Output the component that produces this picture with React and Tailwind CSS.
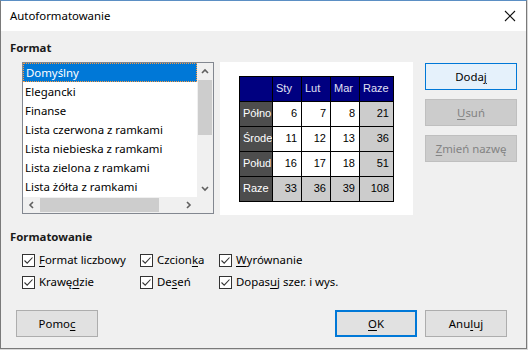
import React from "react";

const font = { fontFamily: '"Noto Sans", "Open Sans", sans-serif' };

function U({ children }) {
  return <span className="underline underline-offset-2 decoration-1">{children}</span>;
}

function Check() {
  return (
    <div className="w-[13px] h-[13px] border border-[#333333] bg-white flex items-center justify-center shrink-0">
      <svg width="11" height="11" viewBox="0 0 11 11">
        <path d="M1.5 5.5 L4.2 8.2 L9.5 2.5" fill="none" stroke="#333333" strokeWidth="1.1" />
      </svg>
    </div>
  );
}

function CheckItem({ label, w }) {
  return (
    <div className={`flex items-center gap-[4px] h-[22px] ${w}`}>
      <Check />
      <span className="text-[11.4px] text-black leading-none">{label}</span>
    </div>
  );
}

function Btn({ children, className = "", variant = "normal" }) {
  const v =
    variant === "default"
      ? "border border-[#0078d7] bg-[#e5f1fb] text-black"
      : variant === "focus"
      ? "border-2 border-[#0078d7] bg-[#e1e1e1] text-black"
      : variant === "disabled"
      ? "border border-[#bfbfbf] bg-[#cccccc] text-[#838383]"
      : "border border-[#adadad] bg-[#e1e1e1] text-black";
  return (
    <div className={`h-[27px] flex items-center justify-center text-[11.4px] ${v} ${className}`}>
      {children}
    </div>
  );
}

const items = [
  "Domyślny",
  "Elegancki",
  "Finanse",
  "Lista czerwona z ramkami",
  "Lista niebieska z ramkami",
  "Lista zielona z ramkami",
  "Lista żółta z ramkami",
];

function Chevron({ dir }) {
  const d = {
    up: "M2 6 L5 3 L8 6",
    down: "M2 3 L5 6 L8 3",
    left: "M6 2 L3 5 L6 8",
    right: "M3 2 L6 5 L3 8",
  }[dir];
  return (
    <svg width="10" height="10" viewBox="0 0 10 10">
      <path d={d} fill="none" stroke="#606060" strokeWidth="1.6" />
    </svg>
  );
}

function ListBox() {
  return (
    <div className="w-[192px] h-[152px] border border-[#828790] bg-white flex flex-col">
      <div className="flex flex-1 min-h-0">
        <div className="flex-1 flex flex-col">
          {items.map((it, i) => (
            <div
              key={it}
              className={`h-[19px] flex items-center pl-[2px] text-[11.4px] whitespace-nowrap ${
                i === 0
                  ? "bg-[#0078d7] text-white border border-dotted border-[#ff9b3d]"
                  : "text-black"
              }`}
            >
              {it}
            </div>
          ))}
        </div>
        <div className="w-[16px] bg-[#f0f0f0] flex flex-col">
          <div className="h-[17px] flex items-center justify-center">
            <Chevron dir="up" />
          </div>
          <div className="flex-1 flex flex-col px-[1px]">
            <div className="h-[55px] bg-[#cdcdcd]" />
          </div>
          <div className="h-[17px] flex items-center justify-center">
            <Chevron dir="down" />
          </div>
        </div>
      </div>
      <div className="h-[16px] flex bg-[#f0f0f0]">
        <div className="w-[17px] flex items-center justify-center">
          <Chevron dir="left" />
        </div>
        <div className="flex-1 flex items-center py-[1px]">
          <div className="w-[119px] h-full bg-[#cdcdcd]" />
        </div>
        <div className="w-[17px] flex items-center justify-center">
          <Chevron dir="right" />
        </div>
        <div className="w-[16px] bg-[#f0f0f0]" />
      </div>
    </div>
  );
}

const cols = ["w-[33px]", "w-[29px]", "w-[29px]", "w-[29px]", "w-[33px]"];

function Cell({ c, type, children }) {
  const base = `${cols[c]} h-[24px] border-r border-black last:border-r-0 flex items-center overflow-hidden whitespace-nowrap text-[11px] shrink-0`;
  const t =
    type === "head"
      ? "bg-[#000080] text-[#e0e0f4] justify-start pl-[3px]"
      : type === "row"
      ? "bg-[#4d4d4d] text-white justify-start pl-[3px]"
      : type === "sum"
      ? "bg-[#cccccc] text-black justify-end pr-[4px]"
      : "bg-white text-black justify-end pr-[4px]";
  return <div className={`${base} ${t}`}>{children}</div>;
}

function Preview() {
  const rows = [
    ["Półno", "6", "7", "8", "21"],
    ["Środe", "11", "12", "13", "36"],
    ["Połud", "16", "17", "18", "51"],
    ["Raze", "33", "36", "39", "108"],
  ];
  return (
    <div className="w-[193px] h-[153px] bg-white flex items-center justify-center">
      <div
        className="border border-black flex flex-col"
        style={{ fontFamily: '"Liberation Sans", Arial, sans-serif' }}
      >
        <div className="flex border-b border-black">
          <Cell c={0} type="head"></Cell>
          <Cell c={1} type="head">Sty</Cell>
          <Cell c={2} type="head">Lut</Cell>
          <Cell c={3} type="head">Mar</Cell>
          <Cell c={4} type="head">Raze</Cell>
        </div>
        {rows.map((r, ri) => (
          <div key={ri} className={`flex ${ri < 3 ? "border-b border-black" : ""}`}>
            {r.map((v, ci) => (
              <Cell
                key={ci}
                c={ci}
                type={ci === 0 ? "row" : ri === 3 || ci === 4 ? "sum" : "data"}
              >
                {v}
              </Cell>
            ))}
          </div>
        ))}
      </div>
    </div>
  );
}

export default function App() {
  return (
    <div className="w-[528px] h-[350px] bg-[#d9d9d9]" style={font}>
      <div className="w-[527px] h-[349px] border border-[#7a7a7a] border-t-[#5b8fc4] flex flex-col bg-[#f0f0f0]">
        <div className="h-[30px] bg-white flex items-center justify-between pl-[9px] pr-[10px] shrink-0">
          <span className="text-[11.4px] text-black">Autoformatowanie</span>
          <svg width="12" height="12" viewBox="0 0 12 12">
            <path d="M1 1 L11 11 M11 1 L1 11" stroke="#111" strokeWidth="1.1" />
          </svg>
        </div>
        <div className="flex-1 flex flex-col">
          <div className="mt-[8px] pl-[9px] h-[18px] flex items-center text-[11.4px] font-bold text-[#1a1a1a]">
            Format
          </div>
          <div className="mt-[5px] flex items-start">
            <div className="ml-[21px]">
              <ListBox />
            </div>
            <div className="ml-[6px]">
              <Preview />
            </div>
            <div className="ml-[12px] w-[92px] flex flex-col gap-[9px] mt-[1px]">
              <Btn variant="default">
                Doda<U>j</U>
              </Btn>
              <Btn variant="disabled">
                <U>U</U>suń
              </Btn>
              <Btn variant="disabled">
                <U>Z</U>mień nazwę
              </Btn>
            </div>
          </div>
          <div className="mt-[13px] pl-[9px] h-[18px] flex items-center text-[11.4px] font-bold text-[#1a1a1a]">
            Formatowanie
          </div>
          <div className="pl-[21px] mt-[3px] flex flex-col">
            <div className="flex">
              <CheckItem w="w-[118px]" label={<><U>F</U>ormat liczbowy</>} />
              <CheckItem w="w-[79px]" label={<>Czcion<U>k</U>a</>} />
              <CheckItem w="w-[130px]" label={<><U>W</U>yrównanie</>} />
            </div>
            <div className="flex">
              <CheckItem w="w-[118px]" label={<>Krawę<U>d</U>zie</>} />
              <CheckItem w="w-[79px]" label={<>De<U>s</U>eń</>} />
              <CheckItem w="w-[150px]" label={<>Dopas<U>u</U>j szer. i wys.</>} />
            </div>
          </div>
          <div className="mt-[17px] flex items-center pl-[15px] pr-[19px]">
            <Btn className="w-[82px]">
              Pomo<U>c</U>
            </Btn>
            <div className="flex-1" />
            <Btn variant="focus" className="w-[82px]">
              <U>O</U>K
            </Btn>
            <Btn className="w-[82px] ml-[8px]">
              Anu<U>l</U>uj
            </Btn>
          </div>
        </div>
      </div>
    </div>
  );
}
